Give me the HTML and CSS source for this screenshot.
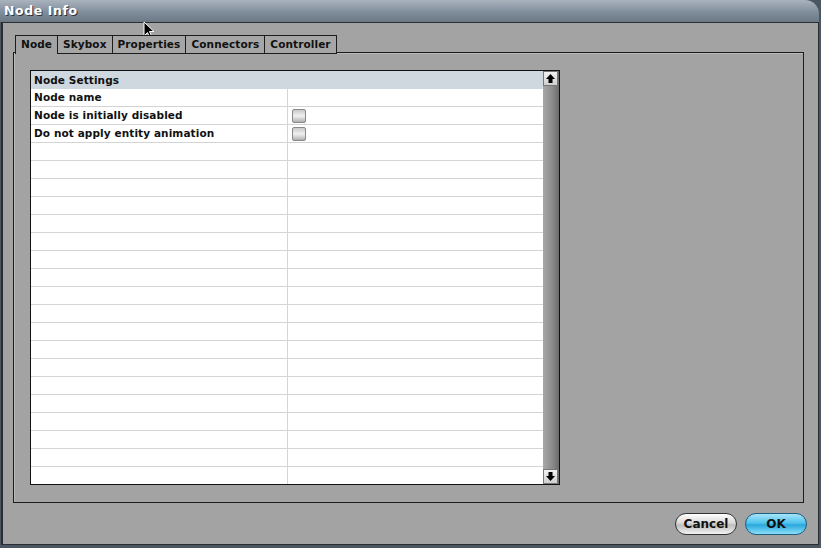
FILE: index.html
```html
<!DOCTYPE html>
<html lang="en">
<head>
    <meta charset="UTF-8">
    <title>Node Info</title>
    <link rel="stylesheet" href="styles.css">
</head>
<body>
    <div class="window">
        <div class="titlebar">Node Info</div>
        <div class="window-body">
            <div class="tabs">
                <div class="tab active">Node</div>
                <div class="tab">Skybox</div>
                <div class="tab">Properties</div>
                <div class="tab">Connectors</div>
                <div class="tab">Controller</div>
            </div>
            <div class="panel">
                <div class="grid">
                    <div class="grid-main">
                        <div class="grid-head">Node Settings</div>
                        <div id="rows"></div>
                    </div>
                    <div class="scrollbar">
                        <div class="scroll-btn">
                            <svg width="11" height="11" viewBox="0 0 11 11"><path d="M5.5 1 L10 6 L7.5 6 L7.5 10 L3.5 10 L3.5 6 L1 6 Z" fill="#000"/></svg>
                        </div>
                        <div class="scroll-track"></div>
                        <div class="scroll-btn">
                            <svg width="11" height="11" viewBox="0 0 11 11"><path d="M5.5 10 L10 5 L7.5 5 L7.5 1 L3.5 1 L3.5 5 L1 5 Z" fill="#000"/></svg>
                        </div>
                    </div>
                </div>
            </div>
            <div class="buttons">
                <button class="btn cancel">Cancel</button>
                <button class="btn ok">OK</button>
            </div>
        </div>
    </div>
    <svg class="cursor" width="12" height="19" viewBox="0 0 12 19"><path d="M1 1 L1 15 L4.5 11.5 L7 17 L9 16 L6.5 10.5 L11 10.5 Z" fill="#000" stroke="#fff" stroke-width="1"/></svg>

    <script>
        const rowData = [
            { label: 'Node name', check: false },
            { label: 'Node is initially disabled', check: true },
            { label: 'Do not apply entity animation', check: true }
        ];
        const rows = document.getElementById('rows');
        for (let i = 0; i < 22; i++) {
            const item = rowData[i] || { label: '', check: false };
            const row = document.createElement('div');
            row.className = 'row';
            const name = document.createElement('div');
            name.className = 'cell name';
            name.textContent = item.label;
            const val = document.createElement('div');
            val.className = 'cell value';
            if (item.check) {
                const box = document.createElement('span');
                box.className = 'checkbox';
                val.appendChild(box);
            }
            row.appendChild(name);
            row.appendChild(val);
            rows.appendChild(row);
        }
    </script>
</body>
</html>
```

FILE: styles.css
```css
html, body {
    margin: 0;
    padding: 0;
}
body {
    width: 821px;
    height: 548px;
    background: #4c5660;
    font-family: "DejaVu Sans", Verdana, sans-serif;
    position: relative;
    overflow: hidden;
}
.window {
    width: 819px;
    height: 545px;
    display: flex;
    flex-direction: column;
}
.titlebar {
    height: 22px;
    line-height: 22px;
    padding-left: 4px;
    background: linear-gradient(#a9b3be, #7d8a98 60%, #6b7886);
    border-top-right-radius: 14px;
    color: #fff;
    font-weight: bold;
    font-size: 12.5px;
    letter-spacing: 0.6px;
    text-shadow: 1px 1px 0 #333;
}
.window-body {
    flex: 1;
    background: #a3a3a3;
    border: 1px solid #2a2e33;
    border-left-width: 2px;
    margin-left: 1px;
    padding: 12px 14px 0 10px;
    display: flex;
    flex-direction: column;
}

/* tabs */
.tabs {
    display: flex;
    padding-left: 2px;
    height: 18px;
    position: relative;
    z-index: 1;
}
.tab {
    height: 17px;
    line-height: 17px;
    padding: 0 5px;
    border: 1px solid #1c1c1c;
    border-left: none;
    background: #a6a6a6;
    font-size: 10.5px;
    font-weight: bold;
    letter-spacing: 0.1px;
    color: #111;
}
.tab.active {
    border-left: 1px solid #1c1c1c;
    border-bottom: none;
    height: 18px;
    background: #a3a3a3;
}
.panel {
    border: 1px solid #1c1c1c;
    margin-top: -1px;
    padding: 17px 16px;
    box-sizing: border-box;
    height: 451px;
    box-shadow: inset 1px 1px 0 #b8b8b8;
}

/* settings grid */
.grid {
    width: 530px;
    height: 415px;
    border: 1px solid #111;
    box-sizing: border-box;
    display: flex;
    background: #fff;
}
.grid-main {
    flex: 1;
    overflow: hidden;
}
.grid-head {
    height: 18px;
    line-height: 18px;
    padding-left: 3px;
    background: #cfd7df;
    font-size: 10.5px;
    font-weight: bold;
    letter-spacing: 0.1px;
    color: #111;
}
.row {
    display: flex;
    height: 18px;
    border-bottom: 1px solid #d4d4d4;
    box-sizing: border-box;
}
.cell {
    font-size: 10.5px;
    font-weight: bold;
    letter-spacing: 0.1px;
    color: #111;
    line-height: 17px;
    padding-left: 3px;
}
.cell.name {
    width: 253px;
    border-right: 1px solid #d4d4d4;
}
.cell.value {
    display: flex;
    align-items: center;
    padding-left: 4px;
}
.checkbox {
    width: 12px;
    height: 12px;
    border: 1px solid #888;
    border-radius: 2px;
    background: linear-gradient(#c9c9c9, #f0f0f0 50%, #b0b0b0);
}

.scrollbar {
    width: 16px;
    display: flex;
    flex-direction: column;
    background: linear-gradient(90deg, #a8a8a8, #8a8a8a 60%, #6c6c6c);
}
.scroll-btn {
    width: 15px;
    height: 15px;
    background: linear-gradient(#f2f2f2, #cfcfcf);
    border: 1px solid #777;
    box-sizing: border-box;
    display: flex;
    align-items: center;
    justify-content: center;
}
.scroll-track {
    flex: 1;
}

/* buttons */
.buttons {
    display: flex;
    justify-content: flex-end;
    gap: 8px;
    margin-top: 10px;
    margin-right: -3px;
}
.btn {
    height: 22px;
    border-radius: 11px;
    border: 1px solid #333;
    font-family: "DejaVu Sans", Verdana, sans-serif;
    font-weight: bold;
    font-size: 12px;
    color: #111;
    padding: 0;
}
.btn.cancel {
    width: 62px;
    background: linear-gradient(#ffffff, #d9d9d9 45%, #bdbdbd 55%, #f3f3f3);
}
.btn.ok {
    width: 62px;
    background: linear-gradient(#a8e4f8, #4fc3ee 45%, #2aa8dd 55%, #8be0fb);
    border-color: #1d5f80;
}

.cursor {
    position: absolute;
    left: 143px;
    top: 21px;
}
```
